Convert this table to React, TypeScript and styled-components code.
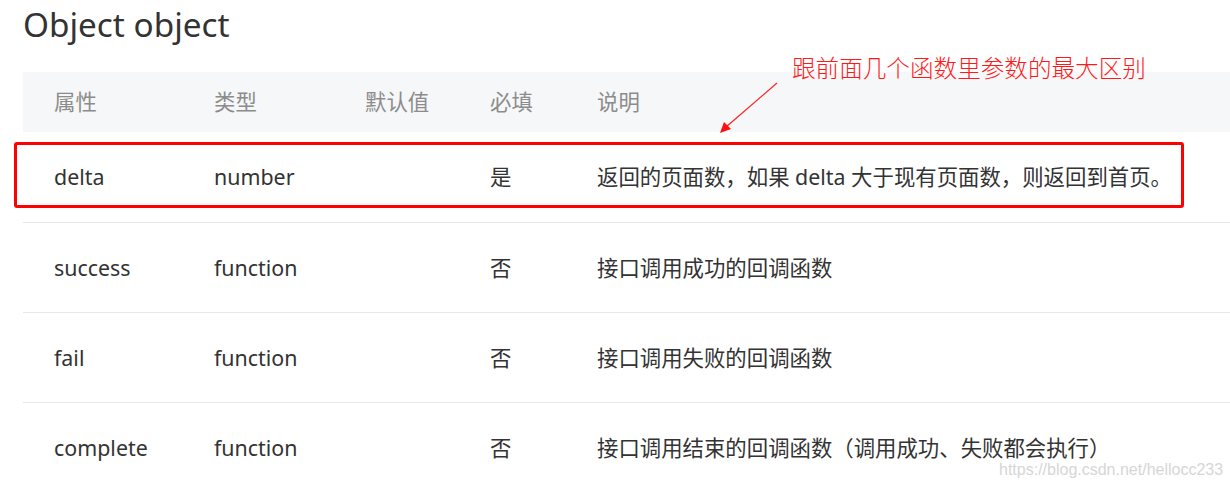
import React from "react";
import styled, { createGlobalStyle } from "styled-components";

const GlobalStyle = createGlobalStyle`
  html, body { margin: 0; padding: 0; background: #ffffff; }
  body {
    font-family: "Noto Sans", "Noto Sans CJK SC", sans-serif;
    color: #333333;
    overflow: hidden;
  }
`;

const Page = styled.div`
  position: relative;
  width: 1230px;
  height: 489px;
  overflow: hidden;
  padding-left: 23px;
  box-sizing: border-box;
`;

const Title = styled.h1`
  margin: 0;
  padding-top: 2px;
  font-size: 33.3px;
  font-weight: 400;
  line-height: 45px;
  color: #333333;
  font-family: "Noto Sans", "Noto Sans CJK SC", sans-serif;
`;

const Table = styled.div`
  margin-top: 25px;
  width: 100%;
  display: flex;
  flex-direction: column;
`;

const Row = styled.div<{ $head?: boolean; $marked?: boolean }>`
  position: relative;
  display: grid;
  grid-template-columns: 160px 151px 125px 107px 1fr;
  align-items: center;
  height: ${(p) => (p.$head ? "60px" : "90px")};
  background: ${(p) => (p.$head ? "#f6f7f9" : "transparent")};
  border-top: ${(p) => (p.$head ? "none" : "1px solid #e8e8e8")};
  box-sizing: border-box;
  &:nth-child(2) { border-top: none; }
  ${(p) =>
    p.$marked &&
    `
    &::after {
      content: "";
      position: absolute;
      left: -9px;
      right: 46px;
      top: 10px;
      bottom: 14px;
      border: 3px solid #ff0000;
      border-radius: 3px;
      pointer-events: none;
    }
  `}
`;

const Cell = styled.div<{ $head?: boolean }>`
  padding-left: 31px;
  font-size: 21.4px;
  line-height: 28px;
  white-space: nowrap;
  color: ${(p) => (p.$head ? "#8c8c8c" : "#333333")};
`;

const Annotation = styled.div`
  position: absolute;
  left: 712px;
  top: 52px;
  width: 440px;
  height: 84px;
  pointer-events: none;
`;

const Callout = styled.div`
  padding-left: 80px;
  font-family: "Noto Sans CJK SC", sans-serif;
  font-weight: 300;
  font-size: 23.6px;
  line-height: 30px;
  color: #ff1a1a;
  white-space: nowrap;
`;

const Arrow = styled.svg`
  position: absolute;
  left: 0;
  top: 26px;
  overflow: visible;
`;

const Watermark = styled.div`
  position: absolute;
  left: 999px;
  top: 460px;
  font-family: "Liberation Sans", Arial, sans-serif;
  font-size: 16px;
  line-height: 20px;
  color: #d6d6d6;
  white-space: nowrap;
`;

const head = ["属性", "类型", "默认值", "必填", "说明"];
const rows: string[][] = [
  ["delta", "number", "", "是", "返回的页面数，如果 delta 大于现有页面数，则返回到首页。"],
  ["success", "function", "", "否", "接口调用成功的回调函数"],
  ["fail", "function", "", "否", "接口调用失败的回调函数"],
  ["complete", "function", "", "否", "接口调用结束的回调函数（调用成功、失败都会执行）"],
];

export default function App() {
  return (
    <>
      <GlobalStyle />
      <Page>
        <Title>Object object</Title>
        <Table>
          <Row $head>
            {head.map((h) => (
              <Cell $head key={h}>{h}</Cell>
            ))}
          </Row>
          {rows.map((r, ri) => (
            <Row key={r[0]} $marked={ri === 0}>
              {r.map((c, i) => (
                <Cell key={i}>{c}</Cell>
              ))}
            </Row>
          ))}
        </Table>
        <Annotation>
          <Callout>跟前面几个函数里参数的最大区别</Callout>
          <Arrow width="70" height="60" viewBox="0 0 70 60">
            <line x1="65" y1="5" x2="14" y2="49" stroke="#ff2020" strokeWidth="1.2" />
            <polygon points="8,55 12,44 19,51" fill="#ff1010" />
          </Arrow>
        </Annotation>
        <Watermark>https://blog.csdn.net/hellocc233</Watermark>
      </Page>
    </>
  );
}
